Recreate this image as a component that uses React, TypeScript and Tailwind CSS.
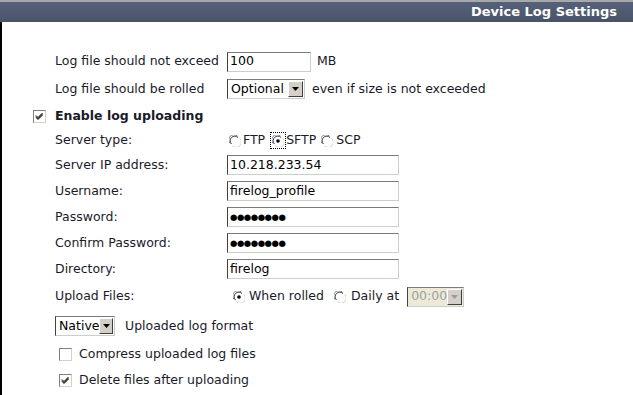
import React from "react";

const font = { fontFamily: '"DejaVu Sans", Verdana, sans-serif' };

const Radio = ({ checked = false }: { checked?: boolean }) => (
  <svg width="12" height="12" viewBox="0 0 12 12" className="shrink-0">
    <circle cx="6" cy="6" r="5.5" fill="#fff" />
    <path d="M1.2 8.5 A5 5 0 0 1 8.5 1.2" fill="none" stroke="#808080" strokeWidth="1" />
    <path d="M2.5 9 A4 4 0 0 1 9 2.5" fill="none" stroke="#404040" strokeWidth="1" />
    <path d="M3.5 10.8 A5 5 0 0 0 10.8 3.5" fill="none" stroke="#d4d0c8" strokeWidth="1" />
    {checked && <circle cx="6" cy="6" r="1.8" fill="#000" />}
  </svg>
);

const Checkbox = ({ checked = false }: { checked?: boolean }) => (
  <span className="relative inline-block w-[13px] h-[13px] shrink-0 bg-white border border-t-[#808080] border-l-[#808080] border-b-[#d4d0c8] border-r-[#d4d0c8]">
    {checked && (
      <svg width="11" height="11" viewBox="0 0 11 11" className="absolute left-0 top-0">
        <path d="M2 4.5 L4 6.5 L8.5 2 M2 5.5 L4 7.5 L8.5 3 M2 6.5 L4 8.5 L8.5 4" fill="none" stroke="#000" strokeWidth="1" />
      </svg>
    )}
  </span>
);

const TextBox = ({ value, w, password = false }: { value: string; w: string; password?: boolean }) => (
  <div
    className={`${w} h-[20px] flex items-center px-[2px] bg-white border border-t-[#7a7a7a] border-l-[#404040] border-b-[#c8d0c8] border-r-[#c8d0c8] text-[12.5px] text-black overflow-hidden`}
  >
    {password ? <span className="tracking-[-0.5px] text-[8.5px]">●●●●●●●●</span> : value}
  </div>
);

const DropArrow = ({ disabled = false }: { disabled?: boolean }) => (
  <span className="w-[15px] h-[16px] flex items-center justify-center bg-[#d4d0c8] border border-t-white border-l-white border-b-[#404040] border-r-[#404040]">
    <svg width="7" height="4" viewBox="0 0 7 4">
      <path d="M0 0 H7 L3.5 4 Z" fill={disabled ? "#9a9a9a" : "#000"} />
    </svg>
  </span>
);

const Select = ({ value, w, disabled = false }: { value: string; w: string; disabled?: boolean }) => (
  <div
    className={`${w} h-[20px] flex items-center justify-between pl-[3px] pr-[1px] border border-t-[#7a7a7a] border-l-[#404040] border-b-[#c8d0c8] border-r-[#c8d0c8] text-[12.5px] ${
      disabled ? "bg-[#ece9d8] text-[#a0a0a0]" : "bg-white text-black"
    }`}
  >
    <span>{value}</span>
    <DropArrow disabled={disabled} />
  </div>
);

const Row = ({ h, label, children }: { h: string; label: string; children: React.ReactNode }) => (
  <div className={`${h} flex items-center`}>
    <div className="w-[172px]">{label}</div>
    <div className="flex items-center">{children}</div>
  </div>
);

export default function App() {
  return (
    <div className="w-[633px] h-[395px] bg-white overflow-hidden text-[12.5px] text-[#1a1a2a]" style={font}>
      <div className="h-[2px] bg-[#a8a8a8]" />
      <div className="h-[20px] flex items-center justify-end pr-[16px] bg-[linear-gradient(180deg,#56607a,#4a5468)]">
        <span className="text-white font-bold text-[13px]">Device Log Settings</span>
      </div>
      <div className="border-l-2 border-black h-[373px] pt-[26px] pl-[53px]">
        <div className="h-[27px] flex items-center">
          <div className="w-[172px]">Log file should not exceed</div>
          <TextBox value="100" w="w-[84px]" />
          <span className="ml-[6px]">MB</span>
        </div>
        <div className="h-[28px] flex items-center">
          <div className="w-[172px]">Log file should be rolled</div>
          <Select value="Optional" w="w-[78px]" />
          <span className="ml-[7px]">even if size is not exceeded</span>
        </div>
        <div className="h-[26px] flex items-center -ml-[22px]">
          <Checkbox checked />
          <span className="ml-[9px] font-bold">Enable log uploading</span>
        </div>
        <div className="h-[23px] flex items-center">
          <div className="w-[174px]">Server type:</div>
          <Radio />
          <span className="ml-[2px]">FTP</span>
          <span className="ml-[5px] flex items-center border border-dotted border-black px-[1px] h-[17px]">
            <Radio checked />
          </span>
          <span>SFTP</span>
          <span className="ml-[5px]"><Radio /></span>
          <span className="ml-[3px]">SCP</span>
        </div>
        <Row h="h-[26px]" label="Server IP address:">
          <TextBox value="10.218.233.54" w="w-[172px]" />
        </Row>
        <Row h="h-[26px]" label="Username:">
          <TextBox value="firelog_profile" w="w-[172px]" />
        </Row>
        <Row h="h-[26px]" label="Password:">
          <TextBox value="" w="w-[172px]" password />
        </Row>
        <Row h="h-[26px]" label="Confirm Password:">
          <TextBox value="" w="w-[172px]" password />
        </Row>
        <Row h="h-[26px]" label="Directory:">
          <TextBox value="firelog" w="w-[172px]" />
        </Row>
        <div className="h-[29px] flex items-center">
          <div className="w-[178px]">Upload Files:</div>
          <Radio checked />
          <span className="ml-[4px]">When rolled</span>
          <span className="ml-[10px]"><Radio /></span>
          <span className="ml-[5px]">Daily at</span>
          <span className="ml-[8px]">
            <Select value="00:00" w="w-[57px]" disabled />
          </span>
        </div>
        <div className="h-[30px] flex items-center">
          <Select value="Native" w="w-[60px]" />
          <span className="ml-[10px]">Uploaded log format</span>
        </div>
        <div className="h-[26px] flex items-center pl-[4px]">
          <Checkbox />
          <span className="ml-[7px]">Compress uploaded log files</span>
        </div>
        <div className="h-[26px] flex items-center pl-[4px]">
          <Checkbox checked />
          <span className="ml-[7px]">Delete files after uploading</span>
        </div>
      </div>
    </div>
  );
}
